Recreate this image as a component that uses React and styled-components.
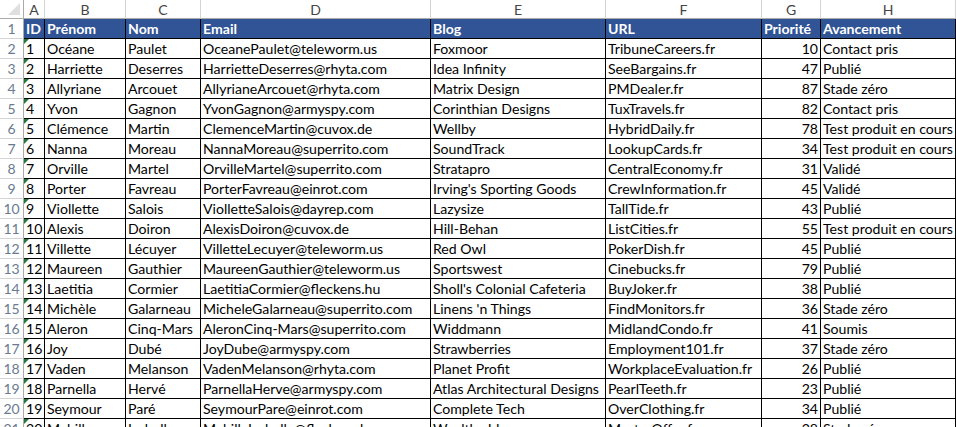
import React from "react";
import styled, { createGlobalStyle } from "styled-components";

const Global = createGlobalStyle`
  html, body { margin: 0; padding: 0; background: #fff; overflow: hidden; }
  body { font-family: Lato, "Open Sans", "Liberation Sans", sans-serif; }
`;

const Sheet = styled.div`
  display: grid;
  grid-template-columns: 24px 21px 81px 75px 230px 175px 156px 59px 135px;
  grid-template-rows: 19px;
  grid-auto-rows: 20px;
  width: 956px;
  height: 427px;
  overflow: hidden;
  font-size: 14.1px;
  color: #000;
`;

const Corner = styled.div`
  position: relative;
  box-sizing: border-box;
  border-right: 1px solid #ababab;
  border-bottom: 1px solid #ababab;
  background: #fff;
  &::after {
    content: "";
    position: absolute;
    right: 3px;
    bottom: 3px;
    border-left: 12px solid transparent;
    border-bottom: 12px solid #dfdfdf;
  }
`;

const ColHead = styled.div`
  box-sizing: border-box;
  border-right: 1px solid #d4d4d4;
  border-bottom: 1px solid #ababab;
  display: flex;
  align-items: center;
  justify-content: center;
  color: #444;
  font-size: 14px;
  line-height: 18px;
  padding-top: 1px;
`;

const RowHead = styled.div`
  box-sizing: border-box;
  border-right: 1px solid #ababab;
  border-bottom: 1px solid #d4d4d4;
  display: flex;
  align-items: flex-end;
  justify-content: center;
  color: #6a7a90;
  font-size: 14px;
  line-height: 19px;
`;

const Cell = styled.div`
  position: relative;
  box-sizing: border-box;
  border-right: 1px solid #000;
  border-bottom: 1px solid #000;
  padding: 0 2px;
  line-height: 19px;
  white-space: nowrap;
  overflow: hidden;
  text-align: ${(p) => p.$align || "left"};
  background: ${(p) => (p.$head ? "#305496" : "#fff")};
  color: ${(p) => (p.$head ? "#fff" : "#000")};
  font-weight: ${(p) => (p.$head ? 700 : 400)};
  ${(p) =>
    p.$flag &&
    `&::before {
      content: "";
      position: absolute;
      top: 0;
      left: 0;
      border-top: 5px solid #1f7a3c;
      border-right: 5px solid transparent;
    }`}
`;

const cols = ["A", "B", "C", "D", "E", "F", "G", "H"];
const heads = ["ID", "Prénom", "Nom", "Email", "Blog", "URL", "Priorité", "Avancement"];

const rows = [
  ["1", "Océane", "Paulet", "OceanePaulet@teleworm.us", "Foxmoor", "TribuneCareers.fr", "10", "Contact pris"],
  ["2", "Harriette", "Deserres", "HarrietteDeserres@rhyta.com", "Idea Infinity", "SeeBargains.fr", "47", "Publié"],
  ["3", "Allyriane", "Arcouet", "AllyrianeArcouet@rhyta.com", "Matrix Design", "PMDealer.fr", "87", "Stade zéro"],
  ["4", "Yvon", "Gagnon", "YvonGagnon@armyspy.com", "Corinthian Designs", "TuxTravels.fr", "82", "Contact pris"],
  ["5", "Clémence", "Martin", "ClemenceMartin@cuvox.de", "Wellby", "HybridDaily.fr", "78", "Test produit en cours"],
  ["6", "Nanna", "Moreau", "NannaMoreau@superrito.com", "SoundTrack", "LookupCards.fr", "34", "Test produit en cours"],
  ["7", "Orville", "Martel", "OrvilleMartel@superrito.com", "Stratapro", "CentralEconomy.fr", "31", "Validé"],
  ["8", "Porter", "Favreau", "PorterFavreau@einrot.com", "Irving's Sporting Goods", "CrewInformation.fr", "45", "Validé"],
  ["9", "Viollette", "Salois", "ViolletteSalois@dayrep.com", "Lazysize", "TallTide.fr", "43", "Publié"],
  ["10", "Alexis", "Doiron", "AlexisDoiron@cuvox.de", "Hill-Behan", "ListCities.fr", "55", "Test produit en cours"],
  ["11", "Villette", "Lécuyer", "VilletteLecuyer@teleworm.us", "Red Owl", "PokerDish.fr", "45", "Publié"],
  ["12", "Maureen", "Gauthier", "MaureenGauthier@teleworm.us", "Sportswest", "Cinebucks.fr", "79", "Publié"],
  ["13", "Laetitia", "Cormier", "LaetitiaCormier@fleckens.hu", "Sholl's Colonial Cafeteria", "BuyJoker.fr", "38", "Publié"],
  ["14", "Michèle", "Galarneau", "MicheleGalarneau@superrito.com", "Linens 'n Things", "FindMonitors.fr", "36", "Stade zéro"],
  ["15", "Aleron", "Cinq-Mars", "AleronCinq-Mars@superrito.com", "Widdmann", "MidlandCondo.fr", "41", "Soumis"],
  ["16", "Joy", "Dubé", "JoyDube@armyspy.com", "Strawberries", "Employment101.fr", "37", "Stade zéro"],
  ["17", "Vaden", "Melanson", "VadenMelanson@rhyta.com", "Planet Profit", "WorkplaceEvaluation.fr", "26", "Publié"],
  ["18", "Parnella", "Hervé", "ParnellaHerve@armyspy.com", "Atlas Architectural Designs", "PearlTeeth.fr", "23", "Publié"],
  ["19", "Seymour", "Paré", "SeymourPare@einrot.com", "Complete Tech", "OverClothing.fr", "34", "Publié"],
  ["20", "Mabille", "Isabelle", "MabilleIsabelle@fleckens.hu", "Wealthy Ideas", "MasterOffer.fr", "28", "Stade zéro"],
];

export default function App() {
  return (
    <>
      <Global />
      <Sheet>
        <Corner />
        {cols.map((c) => (
          <ColHead key={c}>{c}</ColHead>
        ))}
        <RowHead>1</RowHead>
        {heads.map((h) => (
          <Cell key={h} $head>
            {h}
          </Cell>
        ))}
        {rows.map((r, i) => (
          <React.Fragment key={i}>
            <RowHead>{i + 2}</RowHead>
            {r.map((v, j) => (
              <Cell key={j} $flag={j === 0} $align={j === 6 ? "right" : "left"}>
                {v}
              </Cell>
            ))}
          </React.Fragment>
        ))}
      </Sheet>
    </>
  );
}
